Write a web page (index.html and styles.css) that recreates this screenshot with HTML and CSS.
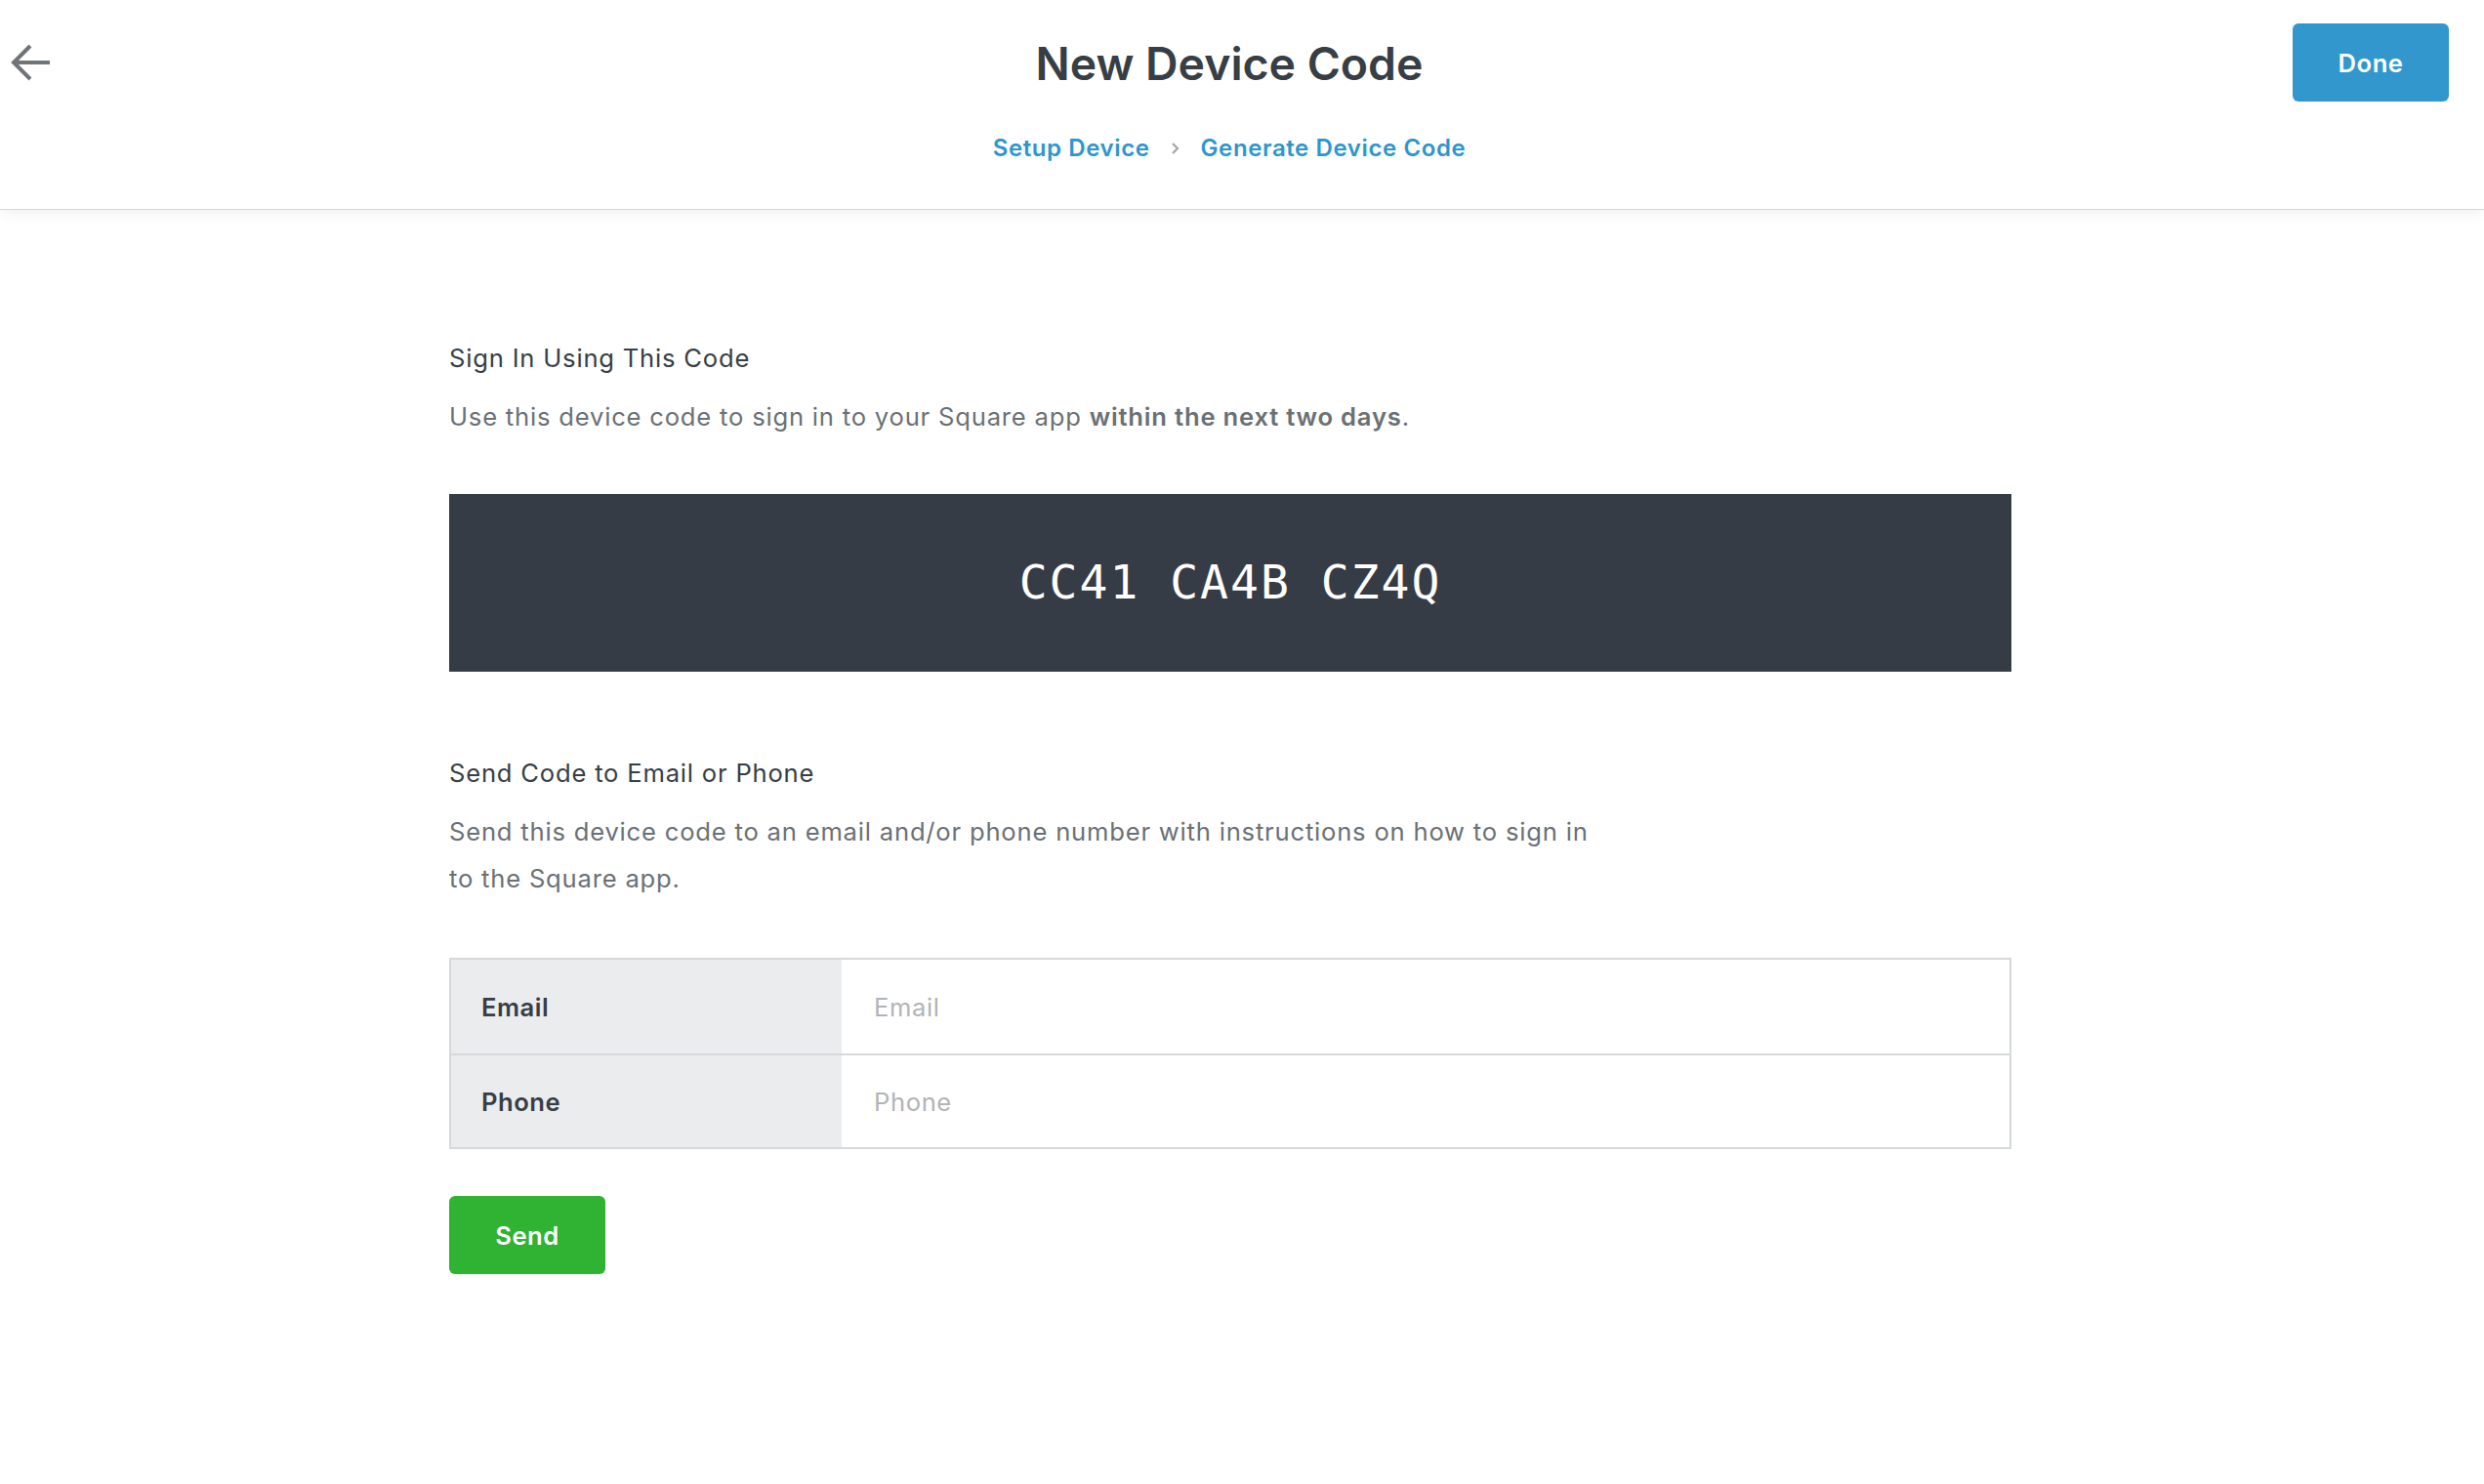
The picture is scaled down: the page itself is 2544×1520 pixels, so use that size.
FILE: index.html
```html
<!DOCTYPE html>
<html lang="en">
<head>
<meta charset="utf-8">
<title>New Device Code</title>
<link rel="stylesheet" href="styles.css">
</head>
<body>
<header class="topbar">
  <div class="topbar-left">
    <button class="back-btn" aria-label="Back">
      <svg width="40" height="40" viewBox="0 0 40 40" aria-hidden="true">
        <path d="M3 20 H40 M20 3 L3 20 L20 37" fill="none" stroke="#6f7479" stroke-width="4" stroke-linejoin="miter"/>
      </svg>
    </button>
  </div>
  <div class="topbar-center">
    <h1 class="page-title">New Device Code</h1>
    <nav class="crumbs">
      <a class="crumb" href="#">Setup Device</a>
      <svg class="crumb-sep" width="10" height="14" viewBox="0 0 10 14" aria-hidden="true">
        <path d="M2 2 L7 7 L2 12" fill="none" stroke="#a3a7ab" stroke-width="2.2"/>
      </svg>
      <a class="crumb" href="#">Generate Device Code</a>
    </nav>
  </div>
  <div class="topbar-right">
    <button class="btn btn-done">Done</button>
  </div>
</header>

<main class="content">
  <section class="block">
    <h2 class="block-title">Sign In Using This Code</h2>
    <p class="block-text">Use this device code to sign in to your Square app <strong>within the next two days</strong>.</p>
  </section>

  <div class="code-box">CC41 CA4B CZ4Q</div>

  <section class="block block-send">
    <h2 class="block-title">Send Code to Email or Phone</h2>
    <p class="block-text block-text-narrow">Send this device code to an email and/or phone number with instructions on how to sign in to the Square app.</p>
  </section>

  <div class="field-table">
    <div class="field-row">
      <label class="field-label" for="email">Email</label>
      <input class="field-input" id="email" type="text" placeholder="Email">
    </div>
    <div class="field-row">
      <label class="field-label" for="phone">Phone</label>
      <input class="field-input" id="phone" type="text" placeholder="Phone">
    </div>
  </div>

  <button class="btn btn-send">Send</button>
</main>
</body>
</html>
```

FILE: styles.css
```css
* {
  box-sizing: border-box;
}

html, body {
  margin: 0;
  padding: 0;
  background: #ffffff;
}

body {
  font-family: Inter, "Noto Sans", "Liberation Sans", sans-serif;
  color: #373e45;
  font-size: 25.6px;
  letter-spacing: 0.8px;
}

/* ---------- top bar ---------- */
.topbar {
  display: grid;
  grid-template-columns: 170px 1fr 196px;
  height: 215px;
  border-bottom: 1px solid #d6d7d8;
  box-shadow: 0 2px 14px rgba(0, 0, 0, 0.07);
  position: relative;
  z-index: 1;
}

.topbar-left {
  padding: 44px 0 0 11px;
}

.back-btn {
  display: block;
  border: 0;
  background: none;
  padding: 0;
  width: 40px;
  height: 40px;
  cursor: pointer;
}

.back-btn svg {
  display: block;
}

.topbar-center {
  display: flex;
  flex-direction: column;
  align-items: center;
  padding-top: 37px;
}

.page-title {
  margin: 0;
  font-size: 46.4px;
  line-height: 56px;
  font-weight: 600;
  letter-spacing: 0;
  color: #373e45;
}

.crumbs {
  display: flex;
  align-items: center;
  gap: 21px;
  margin-top: 41px;
  height: 36px;
}

.crumb {
  font-size: 24px;
  line-height: 36px;
  font-weight: 600;
  letter-spacing: 0.6px;
  color: #2d96cd;
  text-decoration: none;
}

.crumb-sep {
  display: block;
}

.topbar-right {
  padding-top: 24px;
}

.btn {
  display: flex;
  align-items: center;
  justify-content: center;
  width: 160px;
  height: 80px;
  border: 0;
  border-radius: 6px;
  color: #ffffff;
  font-family: Inter, "Noto Sans", "Liberation Sans", sans-serif;
  font-size: 25.6px;
  font-weight: 600;
  letter-spacing: 0.5px;
  cursor: pointer;
  padding: 0;
}

.btn-done {
  background: #3197cc;
}

.btn-send {
  background: #30b233;
  margin-top: 48px;
}

/* ---------- content ---------- */
.content {
  width: 1600px;
  margin-left: 460px;
  padding-top: 134px;
}

.block-title {
  margin: 0;
  font-size: 25.6px;
  line-height: 36px;
  font-weight: 400;
  color: #373e45;
}

.block-text {
  margin: 18px 0 0;
  font-size: 25.6px;
  line-height: 48px;
  color: #6b7075;
}

.block-text strong {
  font-weight: 600;
  color: #6b7075;
}

.block-text-narrow {
  max-width: 1190px;
}

.code-box {
  margin-top: 55px;
  height: 182px;
  background: #363c45;
  color: #ffffff;
  display: flex;
  align-items: center;
  justify-content: center;
  font-family: "DejaVu Sans Mono", "Liberation Mono", monospace;
  font-size: 48px;
  letter-spacing: 2px;
  padding-bottom: 2px;
}

.block-send {
  margin-top: 86px;
}

.field-table {
  margin-top: 57px;
  border: 2px solid #d6d9dc;
}

.field-row {
  display: flex;
  height: 96px;
}

.field-row + .field-row {
  border-top: 2px solid #d6d9dc;
}

.field-label {
  flex: 0 0 400px;
  display: flex;
  align-items: center;
  padding-left: 31px;
  background: #ebecee;
  font-weight: 600;
  letter-spacing: 0.5px;
  color: #373e45;
}

.field-input {
  flex: 1;
  border: 0;
  outline: none;
  padding: 0 0 0 33px;
  font-family: Inter, "Noto Sans", "Liberation Sans", sans-serif;
  font-size: 25.6px;
  letter-spacing: 0.6px;
  color: #373e45;
  background: #ffffff;
}

.field-input::placeholder {
  color: #b1b4b7;
}
```
